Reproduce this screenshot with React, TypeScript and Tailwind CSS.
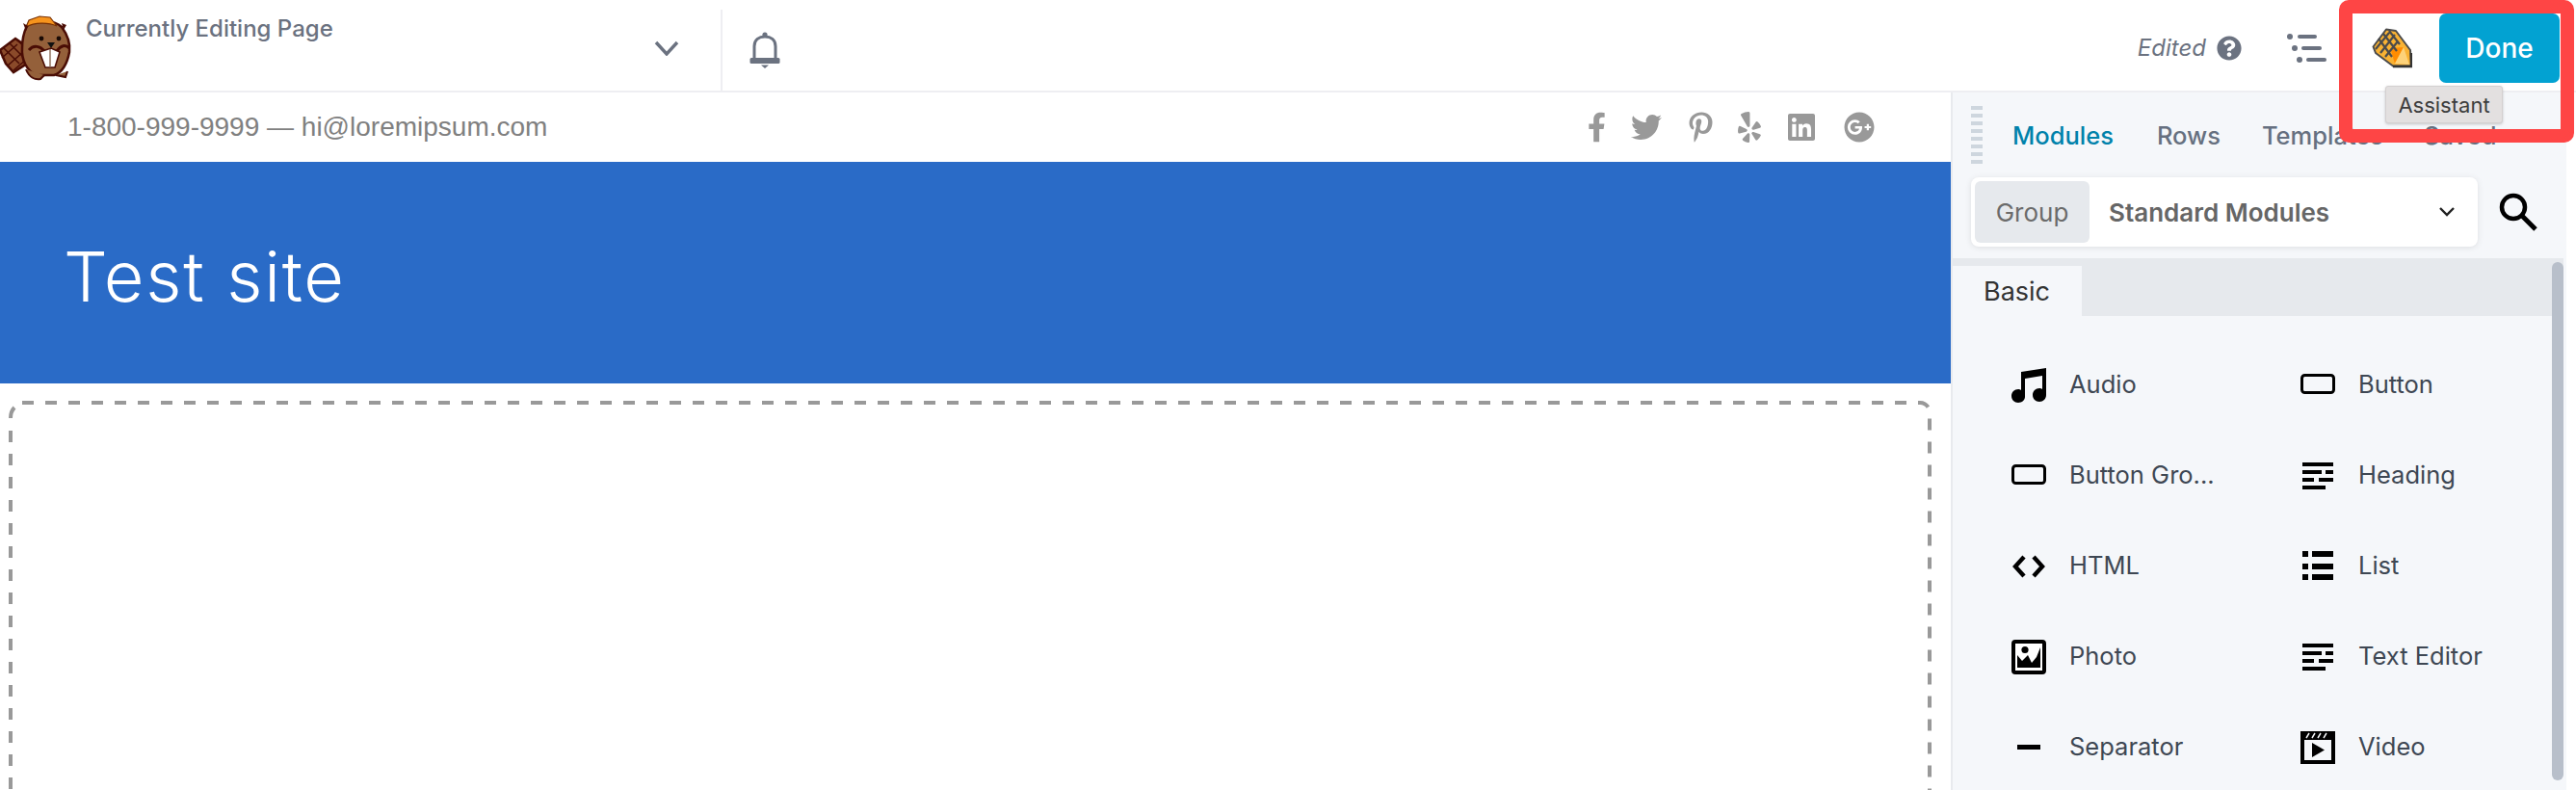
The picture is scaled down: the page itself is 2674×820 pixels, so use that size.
import { FaFacebookF, FaTwitter, FaPinterestP, FaYelp, FaLinkedin, FaGooglePlus, FaQuestionCircle } from "react-icons/fa";
import type { ReactNode } from "react";

function Beaver() {
  return (
    <svg width="75" height="94" viewBox="0 0 75 94" className="shrink-0">
      <path d="M0 52 L16 40 L26 47 L28 66 L14 75 L6 66 Z" fill="#8a4a2a" stroke="#4a0d05" strokeWidth="2.5" />
      <path d="M4 50 L20 66 M10 45 L25 60 M17 41 L27 50 M2 60 L18 46 M8 68 L24 54 M14 73 L27 62" stroke="#4a0d05" strokeWidth="1.6" fill="none" />
      <path d="M28 27 C36 20 56 20 64 28 C70 36 73 46 72 54 C70 66 64 76 56 78 L38 78 C28 74 22 62 23 50 C23 42 25 33 28 27 Z" fill="#94603a" stroke="#4a0d05" strokeWidth="2.5" />
      <path d="M27 28 L30 21 L41 17 L52 18 L59 27 C50 23 36 23 27 28 Z" fill="#f7941d" stroke="#7a3205" strokeWidth="1.2" />
      <path d="M24 24 L29 27 L27 32 Z" fill="#4a0d05" />
      <path d="M64 24 L69 26 L66 31 Z" fill="#4a0d05" />
      <circle cx="43" cy="40" r="2.4" fill="#1a0a05" />
      <circle cx="61" cy="40" r="2.4" fill="#1a0a05" />
      <path d="M49 44 H57 L53 50 Z" fill="#111" />
      <path d="M30 52 C35 46 42 48 46 53 M72 50 C68 46 63 47 59 53" stroke="#4a0d05" strokeWidth="3" fill="none" />
      <path d="M41 54 L53 50 L62 54 L57 70 H47 Z" fill="#fff" stroke="#4a0d05" strokeWidth="1.6" />
      <path d="M52 51 V70" stroke="#8a6a55" strokeWidth="1.4" />
      <path d="M27 72 C30 80 36 83 42 82 L46 78 M58 78 L68 80 L70 74" fill="#94603a" stroke="#4a0d05" strokeWidth="2" />
    </svg>
  );
}

function Pencil() {
  return (
    <svg width="42" height="42" viewBox="0 0 42 42">
      <path d="M1.5 19.5 L15 1.5 L25 3 L40 23 L41 39.5 L22 39.5 L4 26 Z" fill="#f9b233" stroke="#4b4b4b" strokeWidth="2" strokeLinejoin="round" />
      <path d="M19 21 L33 20 L24 37 Z" fill="#ff8c00" />
      <path d="M33 20 L39 38 L24 37 Z" fill="#fdd27a" />
      <path d="M4 22 L18 5 M9 26 L24 7 M14 30 L27 14 M7 11 L21 30 M12 6 L26 24 M18 3 L29 17" stroke="#4b4b4b" strokeWidth="2.2" fill="none" />
      <path d="M22 40 H41 V26" stroke="#333" strokeWidth="2.4" fill="none" />
    </svg>
  );
}

function AudioIcon() {
  return (
    <svg width="36" height="36" viewBox="0 0 36 36">
      <path d="M10 4 L36 0 V28 C36 32 33 35 29 35 C25 35 22 32 22 28 C22 24 25 21 29 21 C30 21 31 21 32 22 V8 L14 11 V30 C14 33 11 36 7 36 C3 36 0 33 0 29 C0 25 3 22 7 22 C8 22 9 22 10 23 Z" fill="#000" />
    </svg>
  );
}

function ButtonIcon() {
  return (
    <svg width="36" height="36" viewBox="0 0 36 36">
      <rect x="1.5" y="7.5" width="33" height="18" rx="3" fill="none" stroke="#000" strokeWidth="3" />
    </svg>
  );
}

function TextIcon() {
  return (
    <svg width="36" height="36" viewBox="0 0 36 36">
      <path d="M2 4 H34 V8 H2 Z M2 12 H22 V16 H2 Z M26 12 H34 V16 H26 Z M2 20 H14 V24 H2 Z M19 20 H34 V24 H19 Z M2 28 H26 V32 H2 Z" fill="#000" />
    </svg>
  );
}

function HtmlIcon() {
  return (
    <svg width="36" height="36" viewBox="0 0 36 36">
      <path d="M13 8 L4 18 L13 28 M23 8 L32 18 L23 28" fill="none" stroke="#000" strokeWidth="4.4" />
    </svg>
  );
}

function ListIcon() {
  return (
    <svg width="36" height="36" viewBox="0 0 36 36">
      <path d="M2 2 H8 V8 H2 Z M12 2 H34 V8 H12 Z M2 15 H8 V21 H2 Z M12 15 H34 V21 H12 Z M2 26 H8 V32 H2 Z M12 26 H34 V32 H12 Z" fill="#000" />
    </svg>
  );
}

function PhotoIcon() {
  return (
    <svg width="36" height="36" viewBox="0 0 36 36">
      <rect x="2" y="2" width="32" height="32" rx="2" fill="#fff" stroke="#000" strokeWidth="4" />
      <path d="M6 16 L11 22 L17 16 L21 24 L26 18 L30 8 V29 H6 Z" fill="#000" />
      <circle cx="14" cy="10.5" r="3.6" fill="#000" />
    </svg>
  );
}

function SeparatorIcon() {
  return (
    <svg width="36" height="36" viewBox="0 0 36 36">
      <rect x="6" y="15" width="24" height="5" fill="#000" />
    </svg>
  );
}

function VideoIcon() {
  return (
    <svg width="36" height="36" viewBox="0 0 36 36">
      <path d="M0 1 H36 V35 H0 Z" fill="#000" />
      <rect x="4" y="10" width="28" height="21" fill="#f5f7fa" />
      <path d="M6 8 L9 3 M12 8 L15 3 M18 8 L21 3 M24 8 L27 3" stroke="#f5f7fa" strokeWidth="1.5" />
      <path d="M12 13 L25 20.5 L12 28 Z" fill="#000" />
    </svg>
  );
}

const modules: { name: string; icon: ReactNode }[] = [
  { name: "Audio", icon: <AudioIcon /> },
  { name: "Button", icon: <ButtonIcon /> },
  { name: "Button Gro...", icon: <ButtonIcon /> },
  { name: "Heading", icon: <TextIcon /> },
  { name: "HTML", icon: <HtmlIcon /> },
  { name: "List", icon: <ListIcon /> },
  { name: "Photo", icon: <PhotoIcon /> },
  { name: "Text Editor", icon: <TextIcon /> },
  { name: "Separator", icon: <SeparatorIcon /> },
  { name: "Video", icon: <VideoIcon /> },
];

function DropZone() {
  return (
    <svg className="absolute inset-0 h-full w-full" fill="none" stroke="#999999" strokeWidth="4">
      <path d="M23 20 H1993 A10 10 0 0 1 2003 30 V500" strokeDasharray="12 12" />
      <path d="M11 49 V500" strokeDasharray="12 12" />
      <path d="M11 36 Q11 29 15 25" />
    </svg>
  );
}

export default function App() {
  return (
    <div className="relative flex h-[820px] w-[2674px] flex-col overflow-hidden bg-white font-['Inter',sans-serif]">
      <header className="flex h-[96px] shrink-0 items-stretch border-b-2 border-[#eeeef2] bg-white">
        <div className="mt-[10px] flex w-[750px] shrink-0 border-r-2 border-[#eeeef2]">
          <div className="-mt-[10px]">
            <Beaver />
          </div>
          <div className="ml-[14px] mt-[6px] text-[24px] font-medium leading-[28px] text-[#6b7280]">
            Currently Editing Page
          </div>
          <svg width="26" height="16" viewBox="0 0 26 16" className="ml-auto mr-[43px] mt-[32px]">
            <path d="M2 2 L13 14 L24 2" fill="none" stroke="#6b7280" strokeWidth="3.4" />
          </svg>
        </div>
        <div className="ml-[28px] mt-[33px]">
          <svg width="32" height="38" viewBox="0 0 32 38">
            <path d="M5 27 V15 C5 8 10 5 16 5 C22 5 27 8 27 15 V27" fill="none" stroke="#6b7280" strokeWidth="3" />
            <circle cx="16" cy="3" r="2.6" fill="#6b7280" />
            <rect x="0.5" y="27" width="31" height="6" rx="1.5" fill="#6b7280" />
            <path d="M12 34.5 H20 L16 38 Z" fill="#6b7280" />
          </svg>
        </div>
        <div className="ml-auto flex items-center pt-[6px]">
          <span className="text-[24px] italic leading-none text-[#6b7280]">Edited</span>
          <FaQuestionCircle size={26} className="ml-[11px] text-[#6b7280]" />
          <svg width="42" height="32" viewBox="0 0 42 32" className="ml-[46px]">
            <g fill="#6b7280">
              <circle cx="4" cy="4" r="3" />
              <circle cx="9" cy="16" r="3" />
              <circle cx="14" cy="28" r="3" />
            </g>
            <g stroke="#6b7280" strokeWidth="4" strokeLinecap="round">
              <path d="M14 4 H30" />
              <path d="M18 16 H35" />
              <path d="M23 28 H40" />
            </g>
          </svg>
          <div className="ml-[47px]">
            <Pencil />
          </div>
          <button className="ml-[28px] mr-[17px] flex h-[72px] w-[125px] items-center justify-center rounded-[7px] bg-[#02a2d2] text-[28px] font-medium text-white">
            Done
          </button>
        </div>
      </header>

      <div className="flex min-h-0 flex-1">
        <main className="flex w-[2025px] shrink-0 flex-col bg-white">
          <div className="flex h-[72px] shrink-0 items-center pl-[70px] font-['Liberation_Sans',sans-serif] text-[#808080]">
            <span className="text-[28px] leading-none">1-800-999-9999 — hi@loremipsum.com</span>
            <div className="ml-[1080px] flex items-center text-[#999999]">
              <FaFacebookF size={32} className="w-[19px]" />
              <FaTwitter size={32} className="ml-[26px]" />
              <FaPinterestP size={32} className="ml-[28px] w-[25px]" />
              <FaYelp size={32} className="ml-[26px] w-[24px]" />
              <FaLinkedin size={32} className="ml-[26px]" />
              <FaGooglePlus size={32} className="ml-[28px]" />
            </div>
          </div>
          <div className="flex h-[230px] shrink-0 items-center bg-[#2a6bc7] pl-[66px] pt-[8px] text-[72px] font-light tracking-[1.7px] text-white">
            Test site
          </div>
          <div className="relative min-h-0 flex-1">
            <DropZone />
          </div>
        </main>

        <aside className="mr-[10px] flex w-[639px] shrink-0 flex-col border-l-2 border-[#e8eaee] bg-[#f5f7fa]">
          <div className="relative h-[88px] shrink-0">
            <div className="absolute left-[19px] top-[14px] flex w-[12px] flex-col gap-[4px]">
              {[0, 1, 2, 3, 4, 5, 6, 7].map((i) => (
                <div key={i} className="h-[4px] bg-[#ced6de]" />
              ))}
            </div>
            <nav className="flex h-full items-center pl-[62px] pt-[2px] text-[25.5px] font-medium text-[#667080]">
              <span className="text-[#0082ab]">Modules</span>
              <span className="ml-[45px]">Rows</span>
              <span className="ml-[43px]">Templates</span>
              <span className="ml-[42px]">Saved</span>
            </nav>
          </div>
          <div className="flex shrink-0 items-center pl-[19px]">
            <div className="flex h-[72px] w-[526px] items-center rounded-[8px] bg-white p-[4px] shadow-[0_1px_6px_rgba(0,0,0,0.1)]">
              <div className="flex h-[64px] w-[119px] items-center justify-center rounded-[6px] bg-[#e6e9ed] text-[26px] text-[#6b6b6b]">
                Group
              </div>
              <span className="ml-[20px] text-[26px] font-semibold text-[#666666]">Standard Modules</span>
              <svg width="18" height="12" viewBox="0 0 18 12" className="ml-auto mr-[19px]">
                <path d="M2 2 L9 9 L16 2" fill="none" stroke="#222" strokeWidth="2.4" />
              </svg>
            </div>
            <svg width="42" height="42" viewBox="0 0 42 42" className="ml-[21px]">
              <circle cx="16" cy="16" r="12" fill="none" stroke="#000" strokeWidth="4.5" />
              <path d="M25 25 L39 39" stroke="#000" strokeWidth="5" />
            </svg>
          </div>
          <div className="relative mt-[12px] flex min-h-0 flex-1 flex-col">
            <div className="mr-[3px] flex h-[60px] shrink-0 items-end bg-[#e6e9ed]">
              <div className="flex h-[52px] w-[134px] items-center bg-[#f5f7fa] pl-[32px] text-[27px] leading-none text-[#333333]">
                Basic
              </div>
            </div>
            <div className="grid grid-cols-[300px_1fr] pl-[61px] pt-[25px]">
              {modules.map((m) => (
                <div key={m.name} className="flex h-[94px] items-center">
                  <div className="flex h-[36px] w-[36px] shrink-0 items-center justify-center">{m.icon}</div>
                  <span className="mb-[2px] ml-[24px] text-[25.5px] text-[#3e4753]">{m.name}</span>
                </div>
              ))}
            </div>
            <div className="absolute right-[3px] top-[4px] h-[538px] w-[12px] rounded-full bg-[#b8bfca]" />
          </div>
        </aside>
      </div>

      <div className="absolute left-[2428px] top-0 h-[148px] w-[244px] rounded-[10px] border-[14px] border-[#fe4545]" />
      <div className="absolute left-[2476px] top-[89px] flex h-[39px] w-[122px] items-center justify-center rounded-[3px] border border-[#d4d0d0] bg-[#e3e0e0] text-[22px] leading-none text-[#3d3d3d] shadow-[0_1px_3px_rgba(0,0,0,0.2)]">
        Assistant
      </div>
    </div>
  );
}
